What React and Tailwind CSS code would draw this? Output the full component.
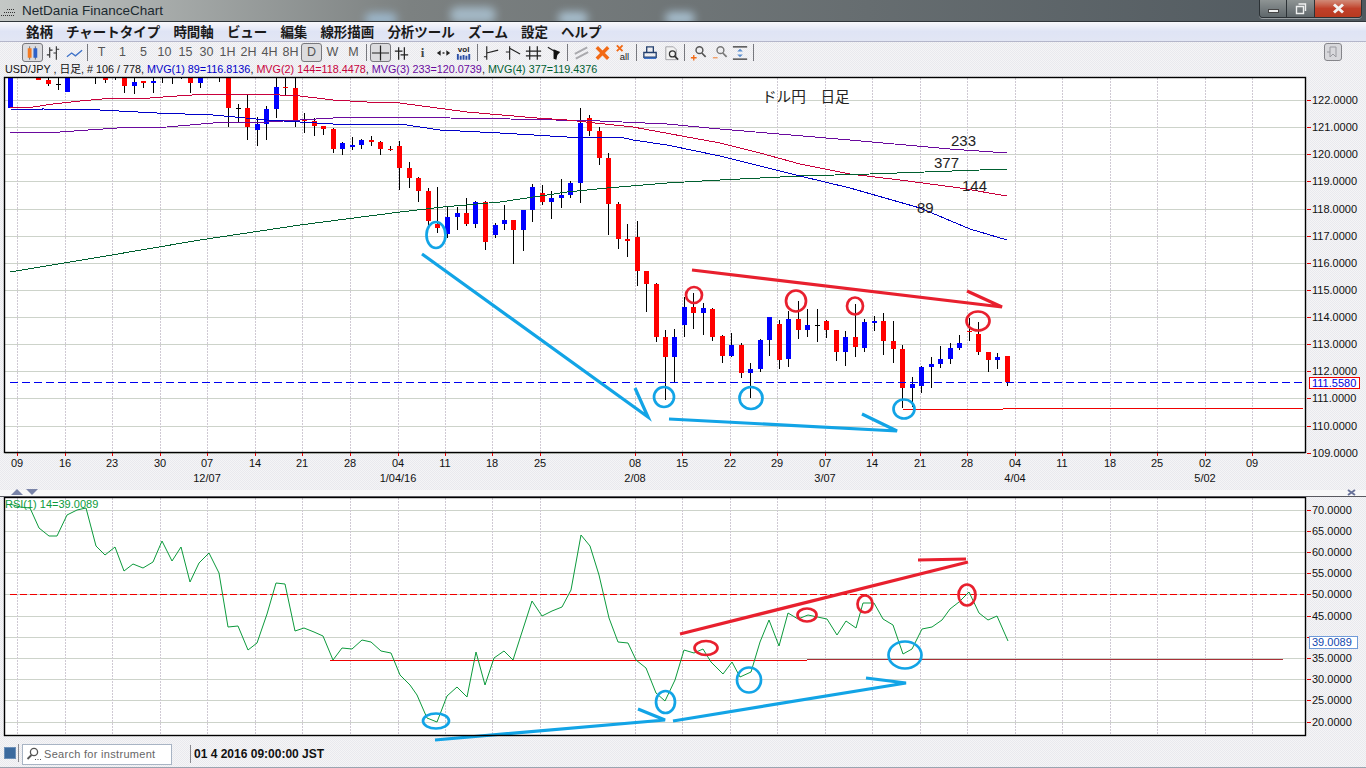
const menus = ['銘柄', 'チャートタイプ', '時間軸', 'ビュー', '編集', '線形描画', '分析ツール', 'ズーム', '設定', 'ヘルプ'];

// x, wick top, wick bottom, body top, body bottom, colour (r red, b blue, k doji)
const candles = [
    [10, 77, 108, 77, 108, 'b'], [38, 77, 80, 77, 80, 'r'], [48, 77, 86, 80, 84, 'r'], [58, 77, 90, 84, 85, 'k'],
    [67, 77, 92, 77, 92, 'b'], [95, 77, 84, 84, 84, 'k'], [105, 77, 83, 77, 80, 'r'], [115, 77, 80, 80, 80, 'k'],
    [124, 77, 93, 77, 86, 'r'], [134, 77, 94, 82, 86, 'b'], [143, 81, 88, 81, 83, 'r'], [153, 77, 93, 81, 83, 'b'],
    [162, 77, 83, 83, 83, 'k'], [172, 77, 84, 84, 84, 'k'], [181, 77, 79, 79, 79, 'k'], [190, 77, 93, 77, 83, 'r'],
    [200, 77, 88, 77, 83, 'b'], [219, 77, 82, 82, 82, 'k'], [228, 77, 127, 77, 108, 'r'], [238, 104, 122, 108, 109, 'k'],
    [247, 95, 140, 108, 127, 'r'], [257, 117, 146, 124, 130, 'b'], [266, 106, 140, 109, 124, 'b'], [276, 77, 118, 87, 109, 'b'],
    [285, 77, 95, 87, 88, 'r'], [295, 77, 127, 88, 122, 'r'], [304, 113, 133, 119, 121, 'r'], [314, 118, 136, 121, 126, 'r'],
    [323, 126, 135, 126, 129, 'r'], [333, 128, 153, 129, 149, 'r'], [342, 142, 155, 143, 149, 'b'], [352, 137, 150, 145, 147, 'b'],
    [361, 139, 149, 140, 145, 'b'], [371, 136, 146, 140, 142, 'r'], [380, 141, 155, 142, 149, 'r'], [390, 146, 151, 149, 150, 'r'],
    [399, 141, 190, 146, 168, 'r'], [409, 162, 188, 168, 178, 'r'], [418, 177, 202, 178, 191, 'r'], [428, 188, 226, 191, 221, 'r'],
    [437, 187, 233, 224, 228, 'r'], [447, 207, 238, 217, 234, 'b'], [457, 207, 230, 213, 217, 'b'], [466, 198, 226, 213, 224, 'r'],
    [475, 201, 228, 202, 224, 'b'], [485, 201, 250, 202, 242, 'r'], [495, 223, 238, 225, 235, 'b'], [504, 205, 230, 220, 224, 'b'],
    [513, 220, 264, 220, 230, 'r'], [523, 210, 251, 210, 230, 'b'], [532, 184, 222, 187, 210, 'b'], [542, 185, 205, 193, 202, 'r'],
    [551, 191, 219, 198, 202, 'b'], [561, 179, 208, 195, 198, 'b'], [570, 181, 198, 183, 195, 'b'], [580, 108, 203, 123, 183, 'b'],
    [589, 115, 136, 118, 131, 'r'], [599, 127, 165, 131, 158, 'r'], [608, 153, 235, 158, 204, 'r'], [618, 202, 249, 204, 239, 'r'],
    [627, 224, 257, 239, 241, 'r'], [637, 221, 286, 237, 271, 'r'], [646, 271, 312, 271, 284, 'r'], [656, 283, 342, 284, 337, 'r'],
    [665, 330, 400, 337, 357, 'r'], [674, 329, 383, 337, 357, 'b'], [684, 297, 337, 307, 325, 'b'], [693, 293, 329, 307, 313, 'r'],
    [703, 303, 335, 308, 313, 'b'], [712, 308, 341, 309, 337, 'r'], [722, 335, 363, 336, 356, 'r'], [731, 333, 357, 345, 356, 'b'],
    [741, 343, 378, 345, 373, 'r'], [750, 363, 398, 369, 373, 'b'], [760, 339, 372, 340, 369, 'b'], [769, 317, 356, 317, 340, 'b'],
    [779, 320, 369, 324, 360, 'r'], [788, 311, 367, 319, 359, 'b'], [798, 301, 339, 319, 330, 'r'], [807, 309, 337, 325, 330, 'b'],
    [817, 309, 342, 325, 326, 'k'], [826, 320, 338, 321, 330, 'r'], [836, 330, 361, 330, 352, 'r'], [845, 331, 366, 337, 352, 'b'],
    [855, 304, 357, 337, 347, 'r'], [864, 319, 352, 322, 348, 'b'], [874, 316, 331, 321, 323, 'b'], [883, 313, 355, 321, 341, 'r'],
    [893, 321, 363, 341, 349, 'r'], [902, 345, 408, 349, 388, 'r'], [912, 377, 407, 384, 388, 'b'], [921, 366, 393, 367, 386, 'b'],
    [931, 357, 388, 364, 367, 'b'], [940, 346, 368, 359, 364, 'b'], [950, 343, 364, 348, 359, 'b'], [959, 335, 350, 343, 348, 'b'],
    [969, 318, 341, 331, 332, 'r'], [978, 322, 355, 334, 352, 'r'], [988, 352, 372, 352, 360, 'r'], [997, 353, 369, 357, 360, 'b'],
    [1007, 356, 386, 356, 382, 'r'],
];

const averages = [
    { color: '#6a0a9e', points: '10,132 60,132 117,128 167,127 213,123 267,122 333,118 357,117 420,117 450,118 510,119 600,121 667,124 720,129 850,140 950,149 1007,153' },
    { color: '#c8003c', points: '10,108 33,107 53,104 80,101 113,98 150,98 177,96 207,94 260,94 300,96 333,100 367,102 400,103 467,112 537,118 567,120 633,127 720,143 760,153 800,164 850,174 900,180 960,188 1007,196' },
    { color: '#0000c8', points: '11,110 43,109 100,110 157,113 213,115 267,120 333,124 400,124 440,130 500,133 567,137 620,137 633,140 667,145 720,156 800,176 850,188 920,208 970,229 1007,240' },
    { color: '#006030', points: '10,272 100,257 200,240 300,225 400,212 443,207 500,202 567,192 607,188 667,183 720,180 800,176 870,174 1007,169' },
];

const rsiLine = '10,504 20,507 30,508 39,528 49,536 57,536 67,515 77,510 86,508 96,546 105,555 115,547 124,571 133,564 143,568 153,562 162,541 172,561 181,547 190,582 199,563 209,553 219,573 228,627 238,626 248,650 257,643 267,614 276,583 285,584 295,631 304,628 314,632 323,636 333,660 342,648 352,649 362,640 371,642 381,651 391,653 400,675 410,685 417,695 427,718 437,722 447,696 457,687 467,697 476,652 485,685 494,658 504,651 513,660 532,601 542,616 552,611 562,607 571,590 581,535 590,546 599,575 609,618 618,642 628,643 636,660 646,668 656,693 665,701 675,680 684,650 694,653 703,649 711,662 723,674 732,662 740,677 751,672 760,642 769,620 779,646 788,613 798,619 808,615 827,619 837,635 846,621 856,628 863,603 874,603 883,619 893,625 903,654 912,649 922,629 932,627 942,620 950,609 959,602 969,592 979,613 988,620 997,616 1008,641';

const gridX = [17, 65, 112, 160, 207, 255, 302, 350, 398, 445, 492, 540, 635, 682, 730, 777, 825, 872, 920, 967, 1015, 1062, 1110, 1157, 1205, 1252];
const days = ['09', '16', '23', '30', '07', '14', '21', '28', '04', '11', '18', '25', '08', '15', '22', '29', '07', '14', '21', '28', '04', '11', '18', '25', '02', '09'];
const months = [[207, '12/07'], [398, '1/04/16'], [635, '2/08'], [825, '3/07'], [1015, '4/04'], [1205, '5/02']];
const prices = Array.from({ length: 14 }, (_, i) => ({ y: Math.round(100 + 27.13 * i), label: `${122 - i}.0000` }));
// the current value box sits on top of the 40 label, so that one has no text
const rsiLevels = Array.from({ length: 11 }, (_, i) => ({ y: Math.round(509.5 + 21.2 * i), label: i === 6 ? '' : `${70 - i * 5}.0000` }));

const BLUE = '#12a4e6';
const RED = '#e8202e';

const Grid = ({ rows, top, bottom }) => (
    <g shapeRendering="crispEdges">
        {rows.map((row) => (
            <line key={row.y} x1="5" x2="1305" y1={row.y + 0.5} y2={row.y + 0.5} stroke="#cdd3ca" />
        ))}
        {gridX.map((x) => (
            <line key={x} x1={x + 0.5} x2={x + 0.5} y1={top} y2={bottom} stroke="#cfc9d3" strokeDasharray="2 1" />
        ))}
    </g>
);

const Axis = ({ rows }) => (
    <g>
        {rows.map((row) => (
            <g key={row.y}>
                <rect x="1307" y={row.y} width="4" height="1" fill="#e00000" />
                <text x="1312" y={row.y + 4} fontSize="11" fill="#111">{row.label}</text>
            </g>
        ))}
    </g>
);

const Ring = ({ c, cx, cy, rx, ry, width = 2.7 }) => (
    <ellipse cx={cx} cy={cy} rx={rx} ry={ry} fill="none" stroke={c} strokeWidth={width} />
);

const Stroke = ({ c, d, width = 3.2 }) => (
    <path d={d} fill="none" stroke={c} strokeWidth={width} strokeLinecap="butt" />
);

const PriceChart = () => (
    <svg width="1366" height="413" viewBox="0 77 1366 413" className="block overflow-visible font-['Liberation_Sans','Noto_Sans_CJK_JP',sans-serif]">
        <rect x="4.5" y="77.5" width="1301" height="375" fill="#fff" />
        <Grid rows={prices} top={78} bottom={452} />
        <g shapeRendering="crispEdges">
            {candles.map(([x, wt, wb, bt, bb, c]) => (
                <g key={x}>
                    <rect x={x} y={wt} width="1" height={wb - wt} fill="#000" />
                    {bb > bt && (
                        <rect x={x - 2} y={bt} width="5" height={bb - bt} fill={c === 'r' ? '#ff0000' : c === 'b' ? '#0000ff' : '#000'} />
                    )}
                </g>
            ))}
            {averages.map((avg) => (
                <polyline key={avg.color} points={avg.points} fill="none" stroke={avg.color} />
            ))}
            <line x1="10" x2="1306" y1="382.5" y2="382.5" stroke="#0000f0" strokeDasharray="8 4" />
            <path d="M903 409.5H1003M1003 408.5H1303" stroke="#f00000" />
        </g>

        <text x="762" y="102" fontSize="14.6" fill="#222">ドル円　日足</text>
        <text x="951" y="146" fontSize="15" fill="#222">233</text>
        <text x="934" y="168" fontSize="15" fill="#222">377</text>
        <text x="962" y="191" fontSize="15" fill="#222">144</text>
        <text x="917" y="213" fontSize="15" fill="#222">89</text>

        <Ring c={BLUE} cx={436} cy={235} rx={9.5} ry={13} />
        <Ring c={BLUE} cx={664} cy={397} rx={10} ry={10} />
        <Ring c={BLUE} cx={751} cy={398} rx={11.5} ry={11} />
        <Ring c={BLUE} cx={904} cy={409} rx={10.5} ry={9.5} />
        <Stroke c={BLUE} d="M422 254L648 417L635 388" />
        <Stroke c={BLUE} d="M669 419L897 431L862 414" />
        <Ring c={RED} cx={694} cy={295} rx={8} ry={8} />
        <Ring c={RED} cx={796} cy={301} rx={10} ry={10.5} />
        <Ring c={RED} cx={855} cy={306} rx={8} ry={8.5} />
        <Ring c={RED} cx={978} cy={321} rx={11.5} ry={9.5} />
        <Stroke c={RED} d="M692 270L1002 307L967 291" />

        <rect x="4.5" y="77.5" width="1301" height="375" fill="none" stroke="#000" strokeWidth="1.4" />
        <Axis rows={prices} />
        <rect x="1309.5" y="377.5" width="50" height="11" fill="#fff" stroke="#f00000" />
        <text x="1312" y="387" fontSize="11" fill="#0000e0">111.5580</text>

        {gridX.map((x, i) => (
            <g key={x}>
                <rect x={x} y="453" width="1" height="3" fill="#e00000" />
                <text x={x} y="467" fontSize="11" textAnchor="middle" fill="#111">{days[i]}</text>
            </g>
        ))}
        {months.map(([x, label]) => (
            <text key={label} x={x} y="482" fontSize="11" textAnchor="middle" fill="#111">{label}</text>
        ))}
    </svg>
);

const RsiChart = () => (
    <svg width="1366" height="240" viewBox="0 497 1366 240" className="block overflow-visible font-['Liberation_Sans',sans-serif]">
        <rect x="4.5" y="497.5" width="1301" height="238" fill="#fff" />
        <Grid rows={rsiLevels} top={498} bottom={735} />
        <g shapeRendering="crispEdges">
            <line x1="10" x2="1304" y1="594.5" y2="594.5" stroke="#f00000" strokeDasharray="7 3" />
            <line x1="330" x2="807" y1="660.5" y2="660.5" stroke="#f00000" />
            <line x1="807" x2="1283" y1="659.5" y2="659.5" stroke="#a83038" />
        </g>
        <polyline points={rsiLine} fill="none" stroke="#0c9a3c" strokeWidth="1" />
        <text x="5" y="508" fontSize="11" fill="#0c9a3c">RSI(1) 14=39.0089</text>

        <Ring c={BLUE} cx={436} cy={721} rx={13} ry={7.5} />
        <Ring c={BLUE} cx={665.5} cy={702} rx={9.5} ry={11} />
        <Ring c={BLUE} cx={749} cy={680} rx={12} ry={12.5} />
        <Ring c={BLUE} cx={905} cy={655} rx={16.5} ry={13.5} />
        <Stroke c={BLUE} d="M435 740L665 720L638 709" />
        <Stroke c={BLUE} d="M673 721L906 683L866 678" />
        <Ring c={RED} cx={706} cy={648} rx={11.5} ry={7} />
        <Ring c={RED} cx={807} cy={615} rx={9.5} ry={6.5} />
        <Ring c={RED} cx={865} cy={604} rx={7.5} ry={8.5} />
        <Ring c={RED} cx={967} cy={595} rx={8.5} ry={10.5} />
        <Stroke c={RED} d="M680 634L968 562" />
        <Stroke c={RED} d="M918 560L966 559" />

        <rect x="4.5" y="497.5" width="1301" height="238" fill="none" stroke="#000" strokeWidth="1.4" />
        <Axis rows={rsiLevels} />
        <rect x="1309.5" y="636.5" width="48" height="12" fill="#fff" stroke="#6f9ad8" />
        <text x="1312" y="646" fontSize="11" fill="#1048b0">39.0089</text>
    </svg>
);

const Icon = ({ children }) => (
    <svg width="20" height="18" viewBox="0 0 20 18" className="block">
        {children}
    </svg>
);

const Slot = ({ active, children }) => (
    <div className={`w-[21px] h-[19px] flex items-center justify-center rounded-[3px] border ${active ? 'bg-[#dcdcdf] border-[#77777c]' : 'border-transparent'}`}>
        {children}
    </div>
);

const Separator = () => <div className="w-px h-[17px] bg-[#77787e] ml-[2px] mr-[3px] mb-[1px] shrink-0" />;

const Frames = ['T', '1', '5', '10', '15', '30', '1H', '2H', '4H', '8H', 'D', 'W', 'M'];

const Toolbar = () => (
    <div className="h-[20px] flex items-end pl-[22px]">
        <Slot active>
            <Icon>
                <path d="M7 2v14M13 2v14" stroke="#666" />
                <rect x="5" y="4" width="4" height="10" fill="#f47a20" />
                <rect x="11" y="4" width="4" height="10" fill="#2f62c8" />
            </Icon>
        </Slot>
        <Slot>
            <Icon>
                <path d="M6 3v11M3 11h3M6 6h3M13 2v14M10 9h3M13 5h3" stroke="#333" strokeWidth="1.2" fill="none" />
            </Icon>
        </Slot>
        <Slot>
            <Icon>
                <path d="M2 13l5-4 4 3 7-6" stroke="#3f73c9" strokeWidth="1.4" fill="none" />
            </Icon>
        </Slot>
        <Separator />
        {Frames.map((frame) => (
            <Slot key={frame} active={frame === 'D'}>
                <span className="text-[12.5px] leading-none text-[#555]">{frame}</span>
            </Slot>
        ))}
        <Separator />
        <Slot active>
            <Icon>
                <path d="M10 1v16M1 9h18" stroke="#222" strokeWidth="1.3" />
            </Icon>
        </Slot>
        <Slot>
            <Icon>
                <path d="M7 3v13M13 3v13M3 7h8M9 11h8" stroke="#222" strokeWidth="1.3" />
            </Icon>
        </Slot>
        <Slot>
            <span className="font-['Liberation_Serif',serif] text-[13px] font-bold leading-none text-[#444]">i</span>
        </Slot>
        <Slot>
            <Icon>
                <path d="M3 9l4-3v6zM17 9l-4-3v6z" fill="#222" />
                <rect x="9" y="8" width="2" height="2" fill="#555" />
            </Icon>
        </Slot>
        <Slot>
            <Icon>
                <text x="3" y="8" fontSize="8.5" fontWeight="700" fill="#222">vol</text>
                <path d="M2 16v-6h2v6zM5 16v-4h2v4zM8 16v-5h2v5zM11 16v-4h2v4zM14 16v-6h2v6z" fill="#2a4fa8" />
            </Icon>
        </Slot>
        <Separator />
        <Slot>
            <Icon>
                <path d="M5 2v14M5 9l12 -3M2 13h3" stroke="#222" strokeWidth="1.2" fill="none" />
            </Icon>
        </Slot>
        <Slot>
            <Icon>
                <path d="M7 2v14M7 4l11 6M3 8h4" stroke="#222" strokeWidth="1.2" fill="none" />
            </Icon>
        </Slot>
        <Slot>
            <Icon>
                <path d="M6 2v14M14 2v14M2 7h16M2 12h16" stroke="#222" strokeWidth="1.3" fill="none" />
            </Icon>
        </Slot>
        <Slot>
            <Icon>
                <path d="M3 3l10 6" stroke="#222" strokeWidth="1.2" />
                <path d="M9 5l7 3-3 3-1 5-3-1z" fill="#111" />
            </Icon>
        </Slot>
        <Separator />
        <Slot>
            <Icon>
                <path d="M3 10L16 3M4 15L17 8" stroke="#a9a9ad" strokeWidth="2" />
            </Icon>
        </Slot>
        <Slot>
            <Icon>
                <path d="M4 3l12 12M16 3L4 15" stroke="#f26a16" strokeWidth="3.6" />
            </Icon>
        </Slot>
        <Slot>
            <Icon>
                <path d="M3 1l6 6M9 1L3 7" stroke="#f26a16" strokeWidth="2" />
                <text x="6" y="16" fontSize="10" fill="#222">all</text>
            </Icon>
        </Slot>
        <Separator />
        <Slot>
            <Icon>
                <path d="M6 2.5h7v6H6zM3 8.5h13v5H3z" fill="none" stroke="#24406e" strokeWidth="1.4" />
                <path d="M3 14.5h13" stroke="#3f73c9" strokeWidth="1.6" />
            </Icon>
        </Slot>
        <Slot>
            <Icon>
                <path d="M4 2.5h8l3 3V16H4z" fill="#f2f2f2" stroke="#a0a0a4" />
                <circle cx="11" cy="10" r="3.2" fill="none" stroke="#333" strokeWidth="1.3" />
                <path d="M13 12l4 4" stroke="#333" strokeWidth="1.6" />
            </Icon>
        </Slot>
        <Separator />
        <Slot>
            <Icon>
                <circle cx="11" cy="6" r="3.6" fill="none" stroke="#555" strokeWidth="1.5" />
                <path d="M13.5 9l4 4" stroke="#555" strokeWidth="1.8" />
                <path d="M2 14h6M5 11v6" stroke="#f26a16" strokeWidth="1.4" />
            </Icon>
        </Slot>
        <Slot>
            <Icon>
                <circle cx="11" cy="6" r="3.6" fill="none" stroke="#777" strokeWidth="1.5" />
                <path d="M13.5 9l4 4" stroke="#777" strokeWidth="1.8" />
                <path d="M3 14h5" stroke="#f09a60" strokeWidth="1.4" />
            </Icon>
        </Slot>
        <Slot>
            <Icon>
                <path d="M2 2.5h15M2 15.5h15" stroke="#333" strokeWidth="1.3" />
                <path d="M9.5 4.5l3 3h-6zM9.5 13.5l3-3h-6z" fill="#5b8fd0" />
            </Icon>
        </Slot>
        <Separator />
        <div className="ml-auto mr-[24px] mb-[1px] w-[18px] h-[18px] rounded-[3px] border border-[#85858a] bg-[#d8d8dc] flex items-center justify-center">
            <svg width="12" height="12" viewBox="0 0 12 12">
                <path d="M3 1h6v10L6 8l-3 3zM0 6h3" fill="none" stroke="#9a9aa0" />
            </svg>
        </div>
    </div>
);

const TitleBar = () => (
    <div className="relative h-[22px] overflow-hidden border-b border-[#30363a] bg-gradient-to-r from-[#c4c8c6] via-[#7c8181] via-30% to-[#4f585e]">
        <span className="absolute left-[365px] top-[13px] w-[32px] h-[12px] rounded-full bg-[#a9cdea] opacity-70 blur-[4px]" />
        <span className="absolute left-[450px] top-[7px] w-[46px] h-[16px] rounded-full bg-[#c0dff5] opacity-60 blur-[4px]" />
        <span className="absolute left-[558px] top-[12px] w-[30px] h-[12px] rounded-full bg-[#c0dff5] opacity-70 blur-[4px]" />
        <span className="absolute left-[665px] top-[12px] w-[30px] h-[12px] rounded-full bg-[#c0dff5] opacity-70 blur-[4px]" />
        <svg width="16" height="10" viewBox="0 0 16 10" className="absolute left-0 top-[8px]">
            <path d="M1 7.5h14M4 4.5h11M7 1.5h8" stroke="#333" strokeDasharray="1 1" />
        </svg>
        <div className="pl-[22px] h-full flex items-center text-[13.5px] leading-none text-[#1c2a30]">NetDania FinanceChart</div>
        <div className="absolute right-[4px] top-0 flex h-[18px] rounded-b-[4px] border border-t-0 border-[#2c3236] overflow-hidden shadow-[0_1px_0_#ffffff66]">
            <div className="w-[27px] flex items-center justify-center border-r border-[#2c3236] bg-gradient-to-b from-[#8e9494] to-[#5f676b]">
                <div className="w-[11px] h-[4px] mt-[4px] bg-[#eef0f0] border border-[#444]" />
            </div>
            <div className="w-[28px] flex items-center justify-center border-r border-[#2c3236] bg-gradient-to-b from-[#8e9494] to-[#5f676b]">
                <svg width="12" height="12" viewBox="0 0 12 12">
                    <path d="M3.5 1h7v7M1.5 3.5h7v7h-7z" fill="none" stroke="#eef0f0" strokeWidth="1.4" />
                </svg>
            </div>
            <div className="w-[46px] flex items-center justify-center bg-gradient-to-b from-[#d08a78] via-[#c0402a] to-[#b73a20]">
                <svg width="13" height="11" viewBox="0 0 13 11">
                    <path d="M2 1.5l9 8M11 1.5l-9 8" stroke="#f2f2f2" strokeWidth="3" />
                </svg>
            </div>
        </div>
    </div>
);

const App = () => {
    return (
        <div className="w-[1366px] h-[768px] overflow-hidden flex flex-col bg-[repeating-conic-gradient(#f5f5f6_0_25%,#e9e9ee_0_50%)] bg-[length:2px_2px] font-['Liberation_Sans','Noto_Sans_CJK_JP',sans-serif]">
            <TitleBar />
            <div className="h-[20px] flex items-end gap-[13px] pl-[26px] pb-[1px] border-b border-[#b4b6ca] bg-gradient-to-b from-[#f8f8fb] via-[#dfe4f5] to-[#e2e6f4] font-['Noto_Sans_CJK_JP',sans-serif] text-[13.5px] font-semibold leading-[17px] text-[#1a1a1a]">
                {menus.map((menu) => (
                    <span key={menu}>{menu}</span>
                ))}
            </div>
            <Toolbar />
            <div className="h-[15px] pl-[5px] flex items-center whitespace-pre text-[10.8px] leading-none text-[#111]">
                USD/JPY , 日足, # 106 / 778,{' '}
                <span className="text-[#0000c8]">MVG(1) 89=116.8136</span>,{' '}
                <span className="text-[#c8003c]">MVG(2) 144=118.4478</span>,{' '}
                <span className="text-[#6a0a9e]">MVG(3) 233=120.0739</span>,{' '}
                <span className="text-[#006030]">MVG(4) 377=119.4376</span>
            </div>
            <PriceChart />
            <div className="h-[7px] relative border-b border-[#5a5a60] bg-[#f8f8f8]">
                <div className="absolute left-[11px] top-[-1px] w-0 h-0 border-x-[6px] border-x-transparent border-b-[6px] border-b-[#7a84a8]" />
                <div className="absolute left-[26px] top-[-1px] w-0 h-0 border-x-[6px] border-x-transparent border-t-[6px] border-t-[#7a84a8]" />
                <svg width="9" height="7" viewBox="0 0 9 7" className="absolute left-[1347px] top-[-1px]">
                    <path d="M1 1l7 5M8 1L1 6" stroke="#6a749a" strokeWidth="2" />
                </svg>
            </div>
            <RsiChart />
            <div className="flex-1 flex items-center pl-[4px] border-b border-[#9aa4b0]">
                <div className="w-[12px] h-[12px] mt-[2px] bg-[#3b6a9e] border border-[#6d90b8]" />
                <div className="w-px h-[18px] ml-[2px] mr-[3px] mt-[2px] bg-[#8a8a90]" />
                <div className="w-[150px] h-[21px] mt-[4px] flex items-center gap-[2px] pl-[3px] bg-white border border-[#a8b4c4]">
                    <svg width="16" height="14" viewBox="0 0 16 14">
                        <circle cx="8" cy="5" r="3.6" fill="none" stroke="#555" strokeWidth="1.3" />
                        <path d="M5.5 8L1.5 12" stroke="#555" strokeWidth="1.8" />
                        <path d="M9 12.5h1M11.5 12.5h1M14 12.5h1" stroke="#555" />
                    </svg>
                    <span className="text-[11px] tracking-[0.3px] leading-none text-[#666]">Search for instrument</span>
                </div>
                <div className="w-px h-[18px] ml-[18px] mr-[3px] mt-[4px] bg-[#8a8a90]" />
                <span className="mt-[4px] text-[12px] font-bold leading-none text-[#111]">01 4 2016 09:00:00 JST</span>
            </div>
        </div>
    );
};

export default App;
